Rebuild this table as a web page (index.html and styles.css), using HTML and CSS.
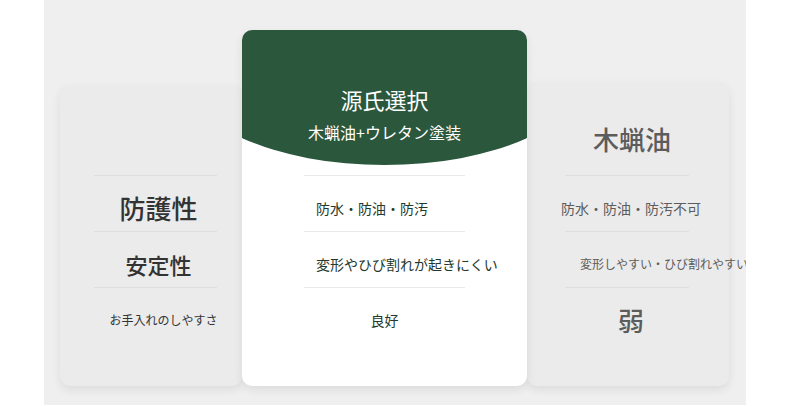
FILE: index.html
```html
<!DOCTYPE html>
<html>
<head>
    <meta charset="UTF-8">
    <title>比較</title>
    <link rel="stylesheet" href="styles.css">
</head>
<body>
<div class="board">

    <div class="card card-left">
        <div class="card-top"></div>
        <div class="row"><span class="t-big">防護性</span></div>
        <div class="row"><span class="t-mid">安定性</span></div>
        <div class="row"><span class="t-small">お手入れのしやすさ</span></div>
    </div>

    <div class="card card-main">
        <div class="card-head">
            <div class="head-title">源氏選択</div>
            <div class="head-sub">木蝋油+ウレタン塗装</div>
        </div>
        <div class="row row-start"><span>防水・防油・防汚</span></div>
        <div class="row row-start"><span>変形やひび割れが起きにくい</span></div>
        <div class="row"><span>良好</span></div>
    </div>

    <div class="card card-right">
        <div class="card-top"><span class="t-big">木蝋油</span></div>
        <div class="row"><span>防水・防油・防汚不可</span></div>
        <div class="row row-start"><span class="t-small">変形しやすい・ひび割れやすい</span></div>
        <div class="row"><span class="t-big">弱</span></div>
    </div>

</div>
</body>
</html>
```

FILE: styles.css
```css
* {
    margin: 0;
    padding: 0;
    box-sizing: border-box;
}

html, body {
    width: 100%;
    height: 100%;
    background: #fff;
    font-family: "Noto Sans CJK JP", "Noto Sans", sans-serif;
}

.board {
    width: 702px;
    height: 405px;
    margin-left: 44px;
    padding: 0 17px 19px 16px;
    background: #efefef;
    display: flex;
    align-items: flex-end;
    overflow: hidden;
}

.card {
    border-radius: 10px;
    box-shadow: 0 4px 10px rgba(0, 0, 0, .08);
}

.card-left {
    width: 182px;
    height: 301px;
    background: #ebebeb;
    padding: 0 25px 0 34px;
    color: #333;
}

.card-right {
    width: 202px;
    height: 304px;
    background: #ebebeb;
    padding: 0 40px 0 38px;
    color: #5c5c5c;
}

.card-main {
    width: 285px;
    height: 356px;
    background: #fff;
    overflow: hidden;
    padding: 0 62px;
    color: #24382c;
    position: relative;
    z-index: 1;
}

.card-left .card-top {
    height: 90px;
}

.card-right .card-top {
    height: 93px;
    display: flex;
    align-items: center;
    justify-content: center;
    padding: 20px 0 0 10px;
}

.card-head {
    margin: 0 -119px 10px;
    height: 135px;
    background: #2b573d;
    border-radius: 0 0 50% 50% / 0 0 90px 90px;
    color: #fff;
    text-align: center;
    padding-top: 54px;
}

.head-title {
    font-size: 22px;
    line-height: 30px;
}

.head-sub {
    font-size: 16px;
    line-height: 22px;
    margin-top: 7px;
}

.row {
    height: 56px;
    border-top: 1px solid #dedede;
    display: flex;
    align-items: center;
    justify-content: center;
    padding-top: 8px;
    font-size: 14px;
    white-space: nowrap;
}

.card-main .row {
    border-top-color: #e8e8e8;
}

.row-start {
    justify-content: flex-start;
    padding-left: 12px;
}

.card-right .row {
    padding-left: 8px;
}

.card-right .row-start {
    padding-left: 15px;
}

.card-left .row {
    padding-left: 6px;
}

.t-big {
    font-size: 26px;
    font-weight: 500;
}

.t-mid {
    font-size: 22px;
    font-weight: 500;
}

.t-small {
    font-size: 12px;
}

.card-left .t-small {
    padding-left: 10px;
}
```
